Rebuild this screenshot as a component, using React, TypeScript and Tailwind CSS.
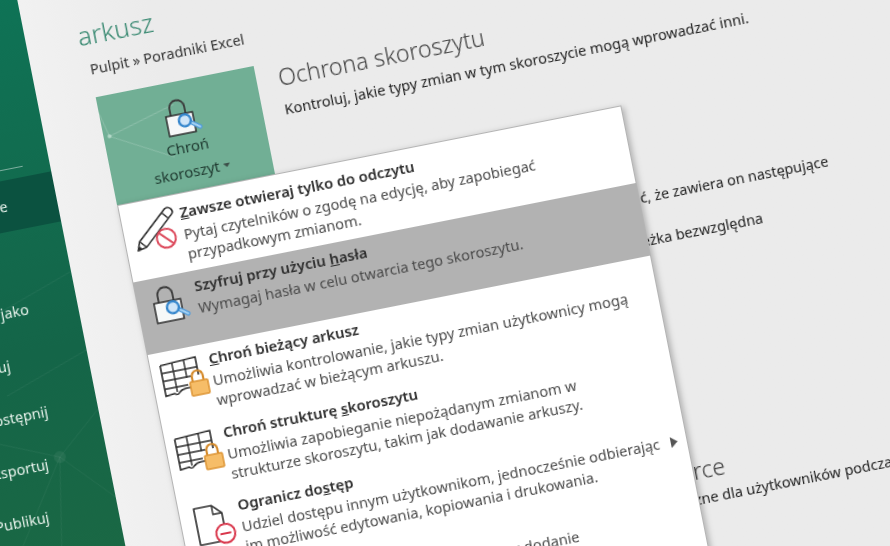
import React from "react";

const LockKey = () => (
  <svg width="40" height="40" viewBox="0 0 40 40" fill="none" className="overflow-visible">
    <path d="M9 16V8a7.500 7.500 0 0 1 15 0v8" stroke="#3a3a3a" strokeWidth="1.800" />
    <rect x="4" y="15" width="27" height="20" fill="#f6f8f8" stroke="#2e2e2e" strokeWidth="1.500" />
    <path d="M25 23l11 8" stroke="#4f9bdc" strokeWidth="4.500" strokeLinecap="round" />
    <path d="M25 23l11 8" stroke="#a9d4f3" strokeWidth="2" strokeLinecap="round" />
    <circle cx="22" cy="22" r="6" fill="#cfe5f8" stroke="#3586cc" strokeWidth="2.400" />
  </svg>
);

const PencilBan = () => (
  <svg width="40" height="40" viewBox="0 0 40 40" fill="none" className="overflow-visible">
    <path d="M-1 35L2 26.300L33 -1.400Q36 -3 38.500 -.5L39.500 1Q41 3.500 38.500 5.500L8 33Z" fill="#fff" stroke="#2e2e2e" strokeWidth="1.600" strokeLinejoin="round" />
    <path d="M2 26.300L8 33M29 2L35 9" stroke="#2e2e2e" strokeWidth="1.300" />
    <path d="M-1 35L.5 30.500L3.500 33.500Z" fill="#2e2e2e" />
    <circle cx="29" cy="28" r="9.500" fill="#fff" stroke="#dc4a5c" strokeWidth="2" />
    <path d="M22.500 21.500l13 13" stroke="#dc4a5c" strokeWidth="2" />
  </svg>
);

const SheetLock = () => (
  <svg width="42" height="40" viewBox="0 0 42 40" fill="none" className="overflow-visible">
    <path d="M-2 3L34 1V19M-2 3V34L7 33C9 35 10 35 12 33C14 31 17 30 20 30H24" fill="#fff" stroke="#2a2a2a" strokeWidth="1.600" />
    <path d="M-2 11H34M-2 19H26M-2 27H22M10 2.500V32M22 2V20" stroke="#2a2a2a" strokeWidth="1.400" />
    <path d="M27 26V20a5.500 5.500 0 0 1 11 0v6" stroke="#d58b2c" strokeWidth="2.200" />
    <rect x="24" y="25" width="18" height="14" rx="1" fill="#f6bd68" stroke="#dd9433" strokeWidth="1.500" />
  </svg>
);

const DocMinus = () => (
  <svg width="40" height="40" viewBox="0 0 40 40" fill="none" className="overflow-visible">
    <path d="M3 1H21L30 10V38H3Z" fill="#fff" stroke="#2a2a2a" strokeWidth="1.600" strokeLinejoin="round" />
    <path d="M21 1V10H30" stroke="#2a2a2a" strokeWidth="1.400" />
    <circle cx="30" cy="31" r="9.500" fill="#fff" stroke="#d9364b" strokeWidth="2" />
    <path d="M24.500 31h11" stroke="#d9364b" strokeWidth="2" />
  </svg>
);

const SideNetwork = () => (
  <svg className="absolute inset-0 w-full h-full" viewBox="0 0 137 730" fill="none">
    <g stroke="#fff" strokeOpacity="0.06">
      <path d="M30 560L90 470L137 430M90 470L137 520M90 470L60 640M20 440L90 470M60 640L137 690M60 640L0 610" />
      <path d="M20 330L137 290M50 400L137 370" />
    </g>
    <circle cx="90" cy="470" r="6" fill="#fff" fillOpacity="0.06" />
    <circle cx="60" cy="640" r="5" fill="#fff" fillOpacity="0.06" />
  </svg>
);

const ButtonNetwork = () => (
  <svg className="absolute inset-0 w-full h-full" viewBox="0 0 161 110" fill="none">
    <g stroke="#fff" strokeOpacity="0.2">
      <path d="M6 41L66 74M6 41L-4 0M6 41L75 22" />
    </g>
    <circle cx="6" cy="41" r="2" fill="#d6eee3" fillOpacity="0.6" />
  </svg>
);

type Item = { icon: React.ReactNode; title: React.ReactNode; lines: string[]; active?: boolean; arrow?: boolean };

const items: Item[] = [
  {
    icon: <PencilBan />,
    title: <><span className="underline">Z</span>awsze otwieraj tylko do odczytu</>,
    lines: ["Pytaj czytelników o zgodę na edycję, aby zapobiegać", "przypadkowym zmianom."],
  },
  {
    icon: <LockKey />,
    title: <>Szyfruj przy użyciu <span className="underline">h</span>asła</>,
    lines: ["Wymagaj hasła w celu otwarcia tego skoroszytu."],
    active: true,
  },
  {
    icon: <SheetLock />,
    title: <><span className="underline">C</span>hroń bieżący arkusz</>,
    lines: ["Umożliwia kontrolowanie, jakie typy zmian użytkownicy mogą", "wprowadzać w bieżącym arkuszu."],
  },
  {
    icon: <SheetLock />,
    title: <>Chroń strukturę <span className="underline">s</span>koroszytu</>,
    lines: ["Umożliwia zapobieganie niepożądanym zmianom w", "strukturze skoroszytu, takim jak dodawanie arkuszy."],
  },
  {
    icon: <DocMinus />,
    title: <>Ogranicz do<span className="underline">s</span>tęp</>,
    lines: ["Udziel dostępu innym użytkownikom, jednocześnie odbierając", "im możliwość edytowania, kopiowania i drukowania."],
    arrow: true,
  },
  {
    icon: <DocMinus />,
    title: <>Dodaj podpis cyfrowy</>,
    lines: ["Zapewnij integralność skoroszytu przez dodanie", "niewidocznego podpisu cyfrowego."],
  },
];

export default function App() {
  return (
    <div className="relative w-[890px] h-[546px] overflow-hidden bg-[#ebebeb] font-['Noto_Sans',sans-serif]">
      <div className="flex w-[1000px] h-[730px] origin-top-left blur-[0.35px] [transform:translate(-119.7px,13.5px)_rotate(-11.2deg)]">
        <aside className="relative w-[137px] shrink-0 bg-linear-to-b from-[#0e7356] via-[#146548] to-[#1e6a41] text-[14.5px] text-[#e8f3ec]">
          <SideNetwork />
          <div className="relative flex flex-col">
            <div className="h-[177px]" />
            <div className="h-px w-[110px] bg-white/45" />
            <div className="h-[10px]" />
            <div className="flex h-[51px] items-center pl-[13px] bg-[#0b5240]">Informacje</div>
            <div className="h-[2px]" />
            <div className="flex h-[52px] items-center pl-[13px]">Zapisz</div>
            <div className="flex h-[52px] items-center pl-[13px]">Zapisz jako</div>
            <div className="flex h-[52px] items-center pl-[13px]">Drukuj</div>
            <div className="flex h-[52px] items-center pl-[13px]">Udostępnij</div>
            <div className="flex h-[52px] items-center pl-[13px]">Eksportuj</div>
            <div className="flex h-[52px] items-center pl-[13px]">Publikuj</div>
          </div>
        </aside>

        <main className="flex-1 pl-[50px] pt-[45px] min-w-0 bg-linear-to-r from-[#f1f1f1] to-[#ebebeb] to-[15%]">
          <h1 className="pl-[2px] text-[26px] leading-[32px] font-light text-[#3a8a72]">arkusz</h1>
          <p className="mt-[8px] text-[14.500px] leading-[20px] text-[#333] whitespace-nowrap pl-[8px]">Pulpit » Poradniki Excel</p>

          <div className="mt-[19px] flex pl-[8px] gap-[22px]">
            <div className="relative w-[161px] shrink-0">
              <div className="relative flex h-[110px] flex-col items-center bg-[#71af95] pt-[18px] text-[15px] leading-[25px] text-[#1f3a30]">
                <ButtonNetwork />
                <div className="relative"><LockKey /></div>
                <div className="relative -mt-[4px]">Chroń</div>
                <div className="relative flex items-center gap-[4px]">
                  skoroszyt
                  <svg width="7" height="4" viewBox="0 0 7 4"><path d="M0 0h7L3.500 4z" fill="#3c4f48" /></svg>
                </div>
              </div>

              <div className="absolute left-0 top-[110px] z-10 w-[514px] h-[500px] border border-[#b4b4b4] bg-white pt-[3px] shadow-[2px_2px_6px_rgba(0,0,0,0.25)]">
                {items.map((it, i) => (
                  <div key={i} className={`relative flex h-[74.5px] gap-[7px] pl-[12px] ${it.active ? "bg-[#b2b2b2]" : ""}`}>
                    <div className="mt-[10px] h-[40px] w-[40px] shrink-0">{it.icon}</div>
                    <div className="pt-[3px]">
                      <div className="text-[14.850px] leading-[24px] font-semibold text-[#2e2e2e]">{it.title}</div>
                      <div className="text-[14.650px] leading-[20px] text-[#4a4a4a] whitespace-nowrap">
                        {it.lines.map((l) => <div key={l}>{l}</div>)}
                      </div>
                    </div>
                    {it.arrow && (
                      <svg className="absolute right-[9px] top-[33px]" width="7" height="11" viewBox="0 0 7 11">
                        <path d="M0 0l7 5.500-7 5.500z" fill="#555" />
                      </svg>
                    )}
                  </div>
                ))}
              </div>
            </div>

            <div className="w-[640px] shrink-0 whitespace-nowrap text-[#222]">
              <h2 className="text-[23.200px] leading-[32px] font-light text-[#444]">Ochrona skoroszytu</h2>
              <p className="mt-[6px] text-[14.550px] leading-[20px]">Kontroluj, jakie typy zmian w tym skoroszycie mogą wprowadzać inni.</p>
              <p className="mt-[137px] text-[14.400px] leading-[20px]">Przed opublikowaniem tego pliku należy pamiętać, że zawiera on następujące</p>
              <p className="mt-[22px] ml-[306px] text-[14.500px] leading-[20px]">Ścieżka bezwzględna</p>
              <h2 className="mt-[210px] ml-[54px] text-[23.200px] leading-[32px] font-light text-[#444]">Opcje widoku w przeglądarce</h2>
              <p className="mt-[2px] ml-[3px] text-[14.500px] leading-[20px]">Wybierz, które elementy skoroszytu będą widoczne dla użytkowników podczas wyświetlania</p>
            </div>
          </div>
        </main>
      </div>
    </div>
  );
}
